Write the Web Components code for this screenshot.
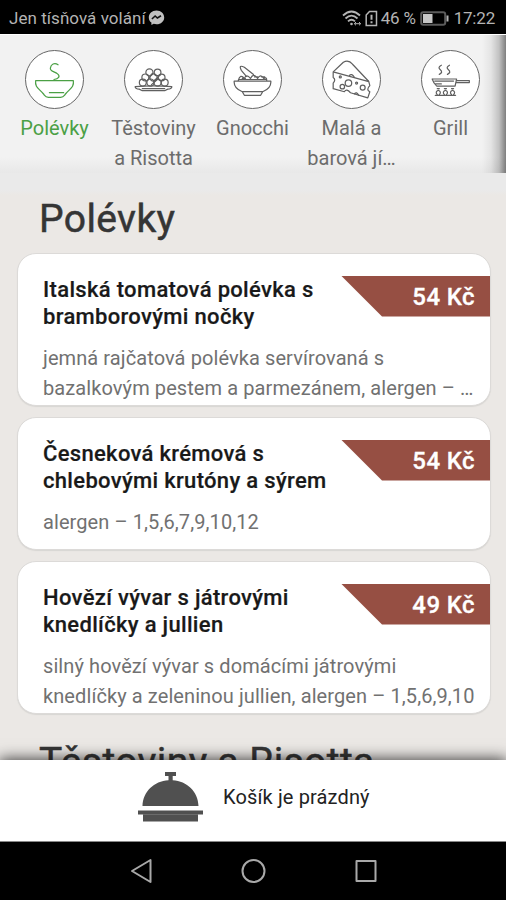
<!DOCTYPE html>
<html lang="cs">
<head>
<meta charset="utf-8">
<title>Menu</title>
<style>
html,body{margin:0;height:900px;overflow:hidden;background:#000}
body{font-family:Roboto,"Liberation Sans",sans-serif}
</style>
</head>
<body>
<menu-app></menu-app>
<script>
const define = (name, html) => customElements.define(name, class extends HTMLElement {
  constructor() {
    super();
    const t = document.createElement('template');
    t.innerHTML = html;
    this.attachShadow({mode: 'open'}).append(t.content.cloneNode(true));
  }
});

define('status-bar', `
<style>
:host{display:flex;align-items:center;height:34px;flex:none;box-sizing:border-box;padding:2px 11px 0 9px;background:#000;color:#b4b4b4;font-size:17px;line-height:24px}
.l{letter-spacing:.05px} .p{letter-spacing:-.2px;margin-left:3px} .t{margin-left:5px;letter-spacing:-.2px}
.g{flex:1} svg{flex:none;display:block}
</style>
<span class="l">Jen tísňová volání</span>
<svg style="margin-left:2px" width="17" height="16" viewBox="0 0 17 16"><path fill="#c0c0c0" d="M8.500 .5C4 .5 .8 3.400 .8 7.400c0 2.200 1 4 2.600 5.200V15l2.300-1.200c.9.300 1.800.4 2.800.4 4.500 0 7.700-2.900 7.700-6.800S13 .5 8.500.5z"/><path d="M3.900 9l3.200-3 2.300 2 3.600-2.200" fill="none" stroke="#111" stroke-width="1.600"/></svg>
<span class="g"></span>
<svg width="20" height="17" viewBox="0 0 20 17" fill="none" stroke="#b4b4b4" stroke-width="1.800"><path d="M1 5.500Q9.500-2.500 18 5.500M3.500 8.500Q9.500 2.800 15.500 8.500M6 11.400Q9.500 8 13 11.400"/><circle cx="9.500" cy="14" r="1.300" fill="#b4b4b4" stroke="none"/><path d="M12.500 13.700h6M14 12l-1.700 1.700L14 15.300M17 12l1.700 1.700L17 15.300" stroke-width="1"/></svg>
<svg style="margin-left:3px" width="13" height="17" viewBox="0 0 13 17" fill="none" stroke="#b4b4b4" stroke-width="1.500"><path d="M4.500 1.500H11.500V15.500H1.200V5z"/><path d="M6.500 4.800v5M6.500 11.300v2" stroke-width="2"/></svg>
<span class="p">46 %</span>
<svg style="margin-left:4px" width="29" height="15" viewBox="0 0 29 15"><rect x="1.200" y="1.200" width="24" height="12.600" rx="2" fill="none" stroke="#5b5b5b" stroke-width="2"/><rect x="3" y="3" width="9.500" height="9" fill="#c6c6c6"/><path d="M27.500 4.500v6" stroke="#b4b4b4" stroke-width="2"/></svg>
<span class="t">17:22</span>
`);

define('category-tab', `
<style>
:host{display:flex;flex-direction:column;align-items:center;width:99px;flex:none;color:#6c6c6c;font-size:20px;line-height:29.500px;text-align:center;white-space:nowrap}
.c{width:59px;height:59px;box-sizing:border-box;border:1.600px solid #666;border-radius:50%;background:#fff;margin-bottom:5px;color:#606060}
:host([active]),:host([active]) .c{color:#4ba045}
::slotted(svg){display:block;width:100%;height:100%;fill:none;stroke:currentColor;stroke-width:1.200;stroke-linecap:round;stroke-linejoin:round}
</style>
<div class="c"><slot name="icon"></slot></div><slot></slot>
`);

define('category-bar', `
<style>
:host{display:flex;height:139px;flex:none;box-sizing:border-box;padding:15px 0 0 5px;overflow:hidden;border-top:1px solid #fff;
background:linear-gradient(90deg,transparent 482px,rgba(0,0,0,.06) 491px,rgba(0,0,0,.2) 499px,rgba(0,0,0,.48) 506px),linear-gradient(#f2f2f2 122px,#e8e8e8)}
</style><slot></slot>
`);

define('menu-heading', `
<style>
:host{display:block;padding-left:39px;font-size:39px;line-height:48px;color:#353535;letter-spacing:.4px;-webkit-text-stroke:.5px #353535;white-space:nowrap}
</style><slot></slot>
`);

define('menu-item', `
<style>
:host{display:grid;grid-template-columns:1fr 149px;align-content:start;width:474px;box-sizing:border-box;margin-left:17px;border:1px solid #dcdad8;border-radius:19px;background:#fff;padding:22px 0 2px 25px;min-height:133px;box-shadow:0 1px 1px #d8d6d3}
.t{font-weight:500;font-size:22px;line-height:27px;color:#191919;letter-spacing:.32px;white-space:nowrap;height:54px;-webkit-text-stroke:.2px #191919}
.p{height:41px;background:#964f43;clip-path:polygon(0 0,100% 0,100% 100%,41px 100%);box-sizing:border-box;padding-right:15px;text-align:right;color:#fff;font-weight:500;font-size:24px;line-height:42px;letter-spacing:.4px;-webkit-text-stroke:.3px #fff}
.d{grid-column:1/-1;margin-top:13px;font-size:20px;line-height:30px;color:#717171;letter-spacing:.09px;white-space:nowrap}
</style>
<div class="t"><slot name="title"></slot></div><div class="p"><slot name="price"></slot></div><div class="d"><slot></slot></div>
`);

define('cart-bar', `
<style>
:host{display:flex;flex:none;height:82px;box-sizing:border-box;background:#fff;border-bottom:1px solid #888;padding:12px 0 0 138px;color:#222;font-size:20px;line-height:50px;box-shadow:0 0 14px 1px rgba(0,0,0,.75);position:relative}
svg{display:block;margin-right:20px} span{letter-spacing:.14px}
</style>
<svg width="65" height="50" viewBox="0 0 65 50"><path fill="#505050" d="M27 0H38V4H34.700V8.200C49 9 60 19.500 60.500 34H4.500C5 19.500 16 9 30.500 8.200V4H27zM0 38.500H65V42.500H60V49.500H5V42.500H0z"/><path d="M5 42.500H60" stroke="#777" stroke-width=".7"/></svg>
<span><slot></slot></span>
`);

define('nav-bar', `
<style>
:host{display:flex;flex:none;height:58px;background:#000;justify-content:center}
svg{display:block}
</style>
<svg width="506" height="58" viewBox="0 0 506 58" fill="none" stroke="#a9a9a9" stroke-width="2" stroke-linejoin="round"><path d="M132 29L150.500 18V40Z"/><circle cx="253.500" cy="29" r="11"/><rect x="356.500" y="19" width="19" height="20"/></svg>
`);

define('menu-app', `
<style>
:host{display:flex;flex-direction:column;width:506px;height:900px;overflow:hidden;background:#ebe8e5}
main{flex:1;min-height:0;overflow:hidden;display:flex;flex-direction:column;padding-top:22px;background:linear-gradient(#eaeaea 17px,#ebe8e5 22px)}
main>*{flex:none}
menu-item{margin-bottom:11px}
.first{margin-bottom:9.500px}
.next{margin-top:13px}
i{font-style:normal}
</style>
<status-bar></status-bar>
<category-bar>
<category-tab active><svg slot="icon" viewBox="0 0 56 56"><path d="M9.500 29H46.500C47.500 36 43 37 39 42C37 44.500 37 45.500 34 45.500H22C19 45.500 19 44.500 17 42C13 37 8.500 36 9.500 29M23 41H37M27.500 28C32 27.500 34 25 31 22.500C28 20 23 20 24 16.500C24.500 13 28 11 31.500 13.500"/></svg>Polévky</category-tab>
<category-tab><svg slot="icon" viewBox="0 0 56 56"><path d="M10 35Q28 33.500 46 35Q46 37 42 37.500L39 39H17L14 37.500Q10 37 10 35M17 37H39"/><circle cx="24" cy="21" r="3.500"/><circle cx="32" cy="21" r="3.300"/><circle cx="20" cy="26" r="3.400"/><circle cx="28" cy="26" r="3.600"/><circle cx="36" cy="26" r="3.300"/><circle cx="17.500" cy="31" r="3.400"/><circle cx="25" cy="31" r="3.500"/><circle cx="32" cy="31" r="3.500"/><circle cx="39" cy="31" r="3.400"/><path d="M22 29L27 22M29 29L35 23M26 33L33 27"/></svg>Těstoviny<br>a Risotta</category-tab>
<category-tab><svg slot="icon" viewBox="0 0 56 56"><path d="M10 29.500H46C46.500 35 43.500 38 38 40L36 43.500H20L18 40C12.500 38 9.500 35 10 29.500M18 40H38M14 29Q16 22 20 27Q22 22 26 27Q29 21 33 27Q36 22 39 27Q42 25 42 29M15 28h26M22 25L17 19Q14 13 20 16L29 23M30 25.500h3M37 25.500h3M18 27h3"/></svg>Gnocchi</category-tab>
<category-tab><svg slot="icon" viewBox="0 0 56 56"><path d="M10 20.500L20 11Q25 8 29 13L45 30L10 20.500V26Q13 28 10 31.500V37L21 40Q23 36.500 27 41L44 46L46 40Q42 38 46 34L45 30"/><circle cx="25" cy="31.500" r="3.200"/><circle cx="39" cy="36" r="2.400"/><circle cx="19" cy="35" r="2.200"/><circle cx="33" cy="31.500" r="1"/><circle cx="17" cy="25.500" r="1"/><path d="M26 24Q28 21.500 31 26M31 42Q33 39.500 35 43.500"/></svg>Malá a<br>barová jí…</category-tab>
<category-tab><svg slot="icon" viewBox="0 0 56 56"><path d="M10 27.500H34L32.500 34.500H14.500Q11.500 32 10 27.500M12.500 29.500H31M13.500 32.300H19M34 29H46.500V31H34M17 23Q21 21 18 18.500Q15 16 19 14M25 23Q29 21 26 18.500Q23 16 27 14M13 43.500H33M15 37h2M22 37h2M29 37h2M15 42.800Q12.500 40 16 38.500Q19.500 40 17 42.800M22 42.800Q19.500 40 23 38.500Q26.500 40 24 42.800M29 42.800Q26.500 40 30 38.500Q33.500 40 31 42.800"/></svg>Grill</category-tab>
</category-bar>
<main>
<menu-heading class="first">Polévky</menu-heading>
<menu-item><i slot="title">Italská tomatová polévka s<br>bramborovými nočky</i><i slot="price">54 Kč</i>jemná rajčatová polévka servírovaná s<br>bazalkovým pestem a parmezánem, alergen – …</menu-item>
<menu-item><i slot="title">Česneková krémová s<br>chlebovými krutóny a sýrem</i><i slot="price">54 Kč</i>alergen – 1,5,6,7,9,10,12</menu-item>
<menu-item><i slot="title">Hovězí vývar s játrovými<br>knedlíčky a jullien</i><i slot="price">49 Kč</i>silný hovězí vývar s domácími játrovými<br>knedlíčky a zeleninou jullien, alergen – 1,5,6,9,10</menu-item>
<menu-heading class="next">Těstoviny a Risotta</menu-heading>
</main>
<cart-bar>Košík je prázdný</cart-bar>
<nav-bar></nav-bar>
`);
</script>
</body>
</html>
